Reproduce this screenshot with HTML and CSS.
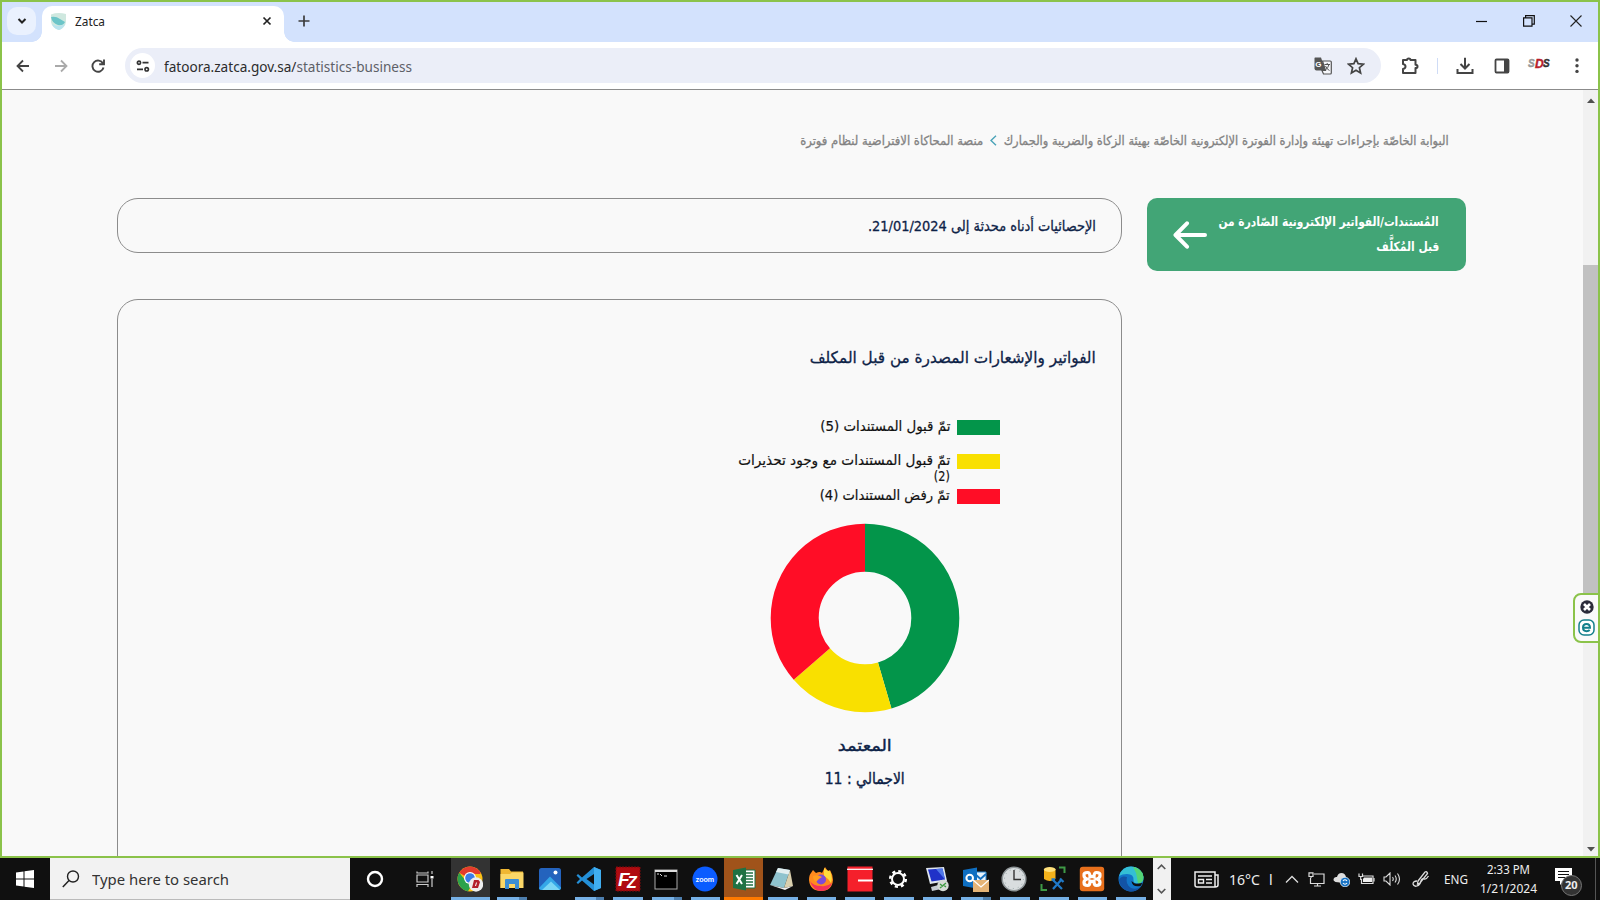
FILE: index.html
```html
<!DOCTYPE html>
<html lang="en">
<head>
<meta charset="utf-8">
<title>Zatca</title>
<link rel="stylesheet" href="styles.css">
</head>
<body>
<div class="desktop">
  <div class="window">
    <header class="tabstrip">
      <div class="tabsearch"><svg width="10" height="8" viewBox="0 0 10 8"><path d="M1.500 2 5 5.500 8.500 2" fill="none" stroke="#222" stroke-width="2"/></svg></div>
      <div class="tab">
        <svg class="favicon" width="17" height="17" viewBox="0 0 17 17"><path d="M1 1.500Q8-1 16 1V9Q15 15 9 17Q2 15 1 9Z" fill="#cfe8df"/><path d="M1 4Q6 3 10 6L15 9Q13 13 8 12Q2 10 1 4Z" fill="#6cc5c8"/><path d="M2 11Q8 15 15 11Q13 16 9 17Q4 16 2 11Z" fill="#b9e4ee"/></svg>
        <span class="fit tabtitle" data-w="30">Zatca</span>
        <svg class="tabclose" width="10" height="10" viewBox="0 0 10 10"><path d="M1.500 1.500 8.500 8.500M8.500 1.500 1.500 8.500" stroke="#222" stroke-width="1.700"/></svg>
      </div>
      <svg class="plus" width="12" height="12" viewBox="0 0 12 12"><path d="M6 .5V11.500M.5 6H11.500" stroke="#3c3c3c" stroke-width="1.700"/></svg>
      <div class="wincontrols">
        <svg width="12" height="12" viewBox="0 0 12 12"><path d="M0 6.500H11" stroke="#111" stroke-width="1.200"/></svg>
        <svg width="12" height="12" viewBox="0 0 12 12"><path d="M.6 2.800H9V11.200H.6ZM2.600 2.800V.7H11.300V9.200H9" fill="none" stroke="#111" stroke-width="1.200"/></svg>
        <svg width="12" height="12" viewBox="0 0 12 12"><path d="M.5.5 11.500 11.500M11.500.5.5 11.500" stroke="#222" stroke-width="1.100"/></svg>
      </div>
    </header>
    <div class="toolbar">
      <svg class="nav" width="14" height="14" viewBox="0 0 14 14"><path d="M13 7H2M7 1.500 1.500 7 7 12.500" fill="none" stroke="#444" stroke-width="1.800"/></svg>
      <svg class="nav" width="14" height="14" viewBox="0 0 14 14"><path d="M1 7H12M7 1.500 12.500 7 7 12.500" fill="none" stroke="#aaa" stroke-width="1.800"/></svg>
      <svg class="nav" width="14" height="14" viewBox="0 0 14 14"><path d="M12 4.500A5.600 5.600 0 1 0 12.500 8.500M13 .5V5.200H8.200" fill="none" stroke="#444" stroke-width="1.900"/></svg>
      <div class="omnibox">
        <div class="siteinfo"><svg width="14" height="12" viewBox="0 0 14 12"><g fill="none" stroke="#333" stroke-width="1.700"><circle cx="3" cy="2.700" r="1.600"/><path d="M6.500 2.700H12.500M1 9.300H7"/><circle cx="10.700" cy="9.300" r="1.700"/></g></svg></div>
        <span class="fit url" data-w="248">fatoora.zatca.gov.sa/<i>statistics-business</i></span>
        <svg class="translate" width="18" height="18" viewBox="0 0 18 18"><path d="M1 .5H7L11.500 13.500H2.500Q.5 13.500.5 11.500V1Z" fill="#555"/><path d="M8.500 4H16.300Q17.300 4 17.300 5V16Q17.300 17 16.300 17H9.500L8 13.500H11.500Z" fill="#f6f7fb" stroke="#555" stroke-width="1.200"/><path d="M10.500 7.500H16M13.200 6V7.500M15 7.500Q14 11 11.500 13M11.500 9Q13 12.500 15.500 13.500" fill="none" stroke="#555"/><text x="1.300" y="10.400" class="gletter">G</text></svg>
        <svg class="star" width="18" height="18" viewBox="0 0 18 18"><path d="M9 1.800 11.100 6.700 16.400 7.200 12.400 10.700 13.600 16 9 13.200 4.400 16 5.600 10.700 1.600 7.200 6.900 6.700Z" fill="none" stroke="#444" stroke-width="1.700"/></svg>
      </div>
      <svg class="puzzle" width="18" height="18" viewBox="0 0 18 18"><path d="M2 3H6Q6 1.500 7.800 1.500Q9.500 1.500 9.500 3H14.500V7.800Q16.500 7.800 16.500 9.400Q16.500 11 14.500 11V16H2V12Q4.500 11.500 4.500 9.500Q4.500 7.500 2 7Z" fill="none" stroke="#444" stroke-width="2" stroke-linejoin="round"/></svg>
      <span class="sep"></span>
      <svg class="download" width="18" height="18" viewBox="0 0 18 18"><path d="M9 .8V11M4.500 7 9 11.500 13.500 7M1.500 12V16H16.500V12" fill="none" stroke="#444" stroke-width="2"/></svg>
      <svg class="sidepanel" width="16" height="16" viewBox="0 0 16 16"><rect x="1.500" y="1.500" width="13" height="13" rx="1" fill="none" stroke="#444" stroke-width="1.800"/><path d="M10 1H15V15H10Z" fill="#444"/></svg>
      <div class="profile"><span>S</span><b>D</b><em>S</em></div>
      <svg class="dots" width="4" height="16" viewBox="0 0 4 16" fill="#444"><circle cx="2" cy="2" r="1.700"/><circle cx="2" cy="7.700" r="1.700"/><circle cx="2" cy="13.400" r="1.700"/></svg>
    </div>
    <div class="viewport">
      <main class="page" dir="rtl" lang="ar">
        <nav class="crumbs">
          <span class="fit" data-w="445">البوابة الخاصّة بإجراءات تهيئة وإدارة الفوترة الإلكترونية الخاصّة بهيئة الزكاة والضريبة والجمارك</span>
          <svg width="7" height="11" viewBox="0 0 7 11"><path d="M6 .8 1 5.500 6 10.200" fill="none" stroke="#4aa3b8" stroke-width="1.400"/></svg>
          <span class="fit" data-w="183">منصة المحاكاة الافتراضية لنظام فوترة</span>
        </nav>
        <div class="columns">
          <aside class="sidecard">
            <div class="sidetext">
              <span class="fit" data-w="220">المُستندات/الفواتير الإلكترونية الصّادرة من</span>
              <span class="fit" data-w="63">قبل المُكلَّف</span>
            </div>
            <svg width="34" height="28" viewBox="0 0 34 28"><path d="M32 14H3M14 2.300 2.500 14 14 25.700" fill="none" stroke="#fff" stroke-width="4" stroke-linecap="round" stroke-linejoin="round"/></svg>
          </aside>
          <section class="content">
            <div class="notice"><span class="fit" data-w="228">الإحصائيات أدناه محدثة إلى 21/01/2024.</span></div>
            <div class="panel">
              <h1 class="fit" data-w="286">الفواتير والإشعارات المصدرة من قبل المكلف</h1>
              <div class="chartcol">
                <ul class="legend">
                  <li><i class="sw green"></i><span class="fit" data-w="130">تمّ قبول المستندات (5)</span></li>
                  <li><i class="sw yellow"></i><div><span class="fit" data-w="212">تمّ قبول المستندات مع وجود تحذيرات</span><span class="fit" data-w="16">(2)</span></div></li>
                  <li><i class="sw red"></i><span class="fit" data-w="130">تمّ رفض المستندات (4)</span></li>
                </ul>
                <svg class="donut" width="190" height="190" viewBox="-95 -95 190 190">
                  <g fill="none" stroke-width="48" transform="rotate(-90)">
                    <circle r="70.300" pathLength="11" stroke="#03954a" stroke-dasharray="5 6"/>
                    <circle r="70.300" pathLength="11" stroke="#f9e000" stroke-dasharray="2 9" stroke-dashoffset="-5"/>
                    <circle r="70.300" pathLength="11" stroke="#ff0d26" stroke-dasharray="4 7" stroke-dashoffset="-7"/>
                  </g>
                </svg>
                <div class="caption"><span class="fit" data-w="54">المعتمد</span></div>
                <div class="caption"><span class="fit" data-w="80">الاجمالي : 11</span></div>
              </div>
            </div>
          </section>
        </div>
      </main>
      <div class="scrollbar">
        <svg width="8" height="5" viewBox="0 0 8 5"><path d="M0 5 4 .5 8 5Z" fill="#505050"/></svg>
        <div class="thumb"></div>
        <svg width="8" height="5" viewBox="0 0 8 5"><path d="M0 0 4 4.500 8 0Z" fill="#505050"/></svg>
      </div>
    </div>
    <div class="widget">
      <svg width="14" height="14" viewBox="0 0 14 14"><circle cx="7" cy="7" r="6.700" fill="#2b2b3a"/><path d="M4 4 10 10M10 4 4 10" stroke="#fff" stroke-width="2.600"/></svg>
      <svg width="17" height="17" viewBox="0 0 17 17"><rect x="1" y="1" width="15" height="15" rx="5" fill="#fff" stroke="#14808c" stroke-width="1.500"/><path d="M4.500 8.700H12Q12 5 8.500 5Q5 5 5 8.600Q5 12.200 8.600 12.200Q10.500 12.200 11.700 11" fill="none" stroke="#14808c" stroke-width="2"/></svg>
    </div>
  </div>
  <footer class="taskbar">
    <div class="start"><svg width="18" height="18" viewBox="0 0 18 18" fill="#fff"><path d="M0 2.500 7.500 1.400V8.500H0ZM8.500 1.200 18 0V8.500H8.500ZM0 9.500H7.500V16.600L0 15.500ZM8.500 9.500H18V18L8.500 16.800Z"/></svg></div>
    <div class="search"><svg width="18" height="18" viewBox="0 0 18 18"><circle cx="11" cy="6.500" r="5.500" fill="none" stroke="#222" stroke-width="1.400"/><path d="M7 10.500.8 17" stroke="#222" stroke-width="1.500"/></svg><span class="fit" data-w="137">Type here to search</span></div>
    <div class="cell cortana"><svg width="18" height="18" viewBox="0 0 18 18"><circle cx="9" cy="9" r="7" fill="none" stroke="#fff" stroke-width="2.400"/></svg></div>
    <div class="cell taskview"><svg width="18" height="17" viewBox="0 0 18 17"><path d="M1 4H12V11H1ZM1 .5V2H12V.5M1 16V13.500H12V16M16 0V3M16 8V16" fill="none" stroke="#ccc" stroke-width="1.200"/><path d="M14.500 5H17.500V7.500H14.500Z" fill="#fff"/></svg></div>
    <div class="apps">
      <div class="app on active"><svg viewBox="0 0 26 26"><circle cx="13" cy="13" r="12.500" fill="#fbc116"/><path d="M13 13 2.200 6.800A12.500 12.500 0 0 1 23.800 6.800L23 8H13Z" fill="#e33b2e"/><path d="M2.200 6.800A12.500 12.500 0 0 0 11 25.300L16 17 9 15Z" fill="#2ba24c"/><circle cx="13" cy="12" r="6" fill="#fff"/><circle cx="13" cy="12" r="4.800" fill="#3b7de8"/><circle cx="19" cy="18.500" r="7.200" fill="#eee"/><path d="M17 14H21.500L23 16 21 22H15Z" fill="#b3202c"/><path d="M19 16.500H20L19 20H18Z" fill="#fff"/></svg></div>
      <div class="app on stack"><svg viewBox="0 0 26 26"><path d="M1.500 3H10L12 5.500H24V22H1.500Z" fill="#f0b732"/><path d="M1.500 8H11L13 6.500H24.500V22H1.500Z" fill="#fbd767"/><path d="M6 23V14Q6 13 7 13H19Q20 13 20 14V23H16V18H10V23Z" fill="#3c8ed4"/></svg></div>
      <div class="app"><svg viewBox="0 0 26 26"><rect x="2" y="2" width="22" height="22" rx="2.500" fill="#2463bd"/><path d="M2 22 13 10.500 24 21.500Q24 24 21.500 24H4.500Q2 24 2 22Z" fill="#35a8e8"/><path d="M5 24 14 15.500 23 24Z" fill="#7bd7f5"/><circle cx="18.500" cy="6.500" r="2" fill="#fff"/></svg></div>
      <div class="app on stack"><svg viewBox="0 0 26 26"><path d="M18 1 25 4V22L18 25 6 14.500 2 18 .5 16.500 4 13 .5 9.500 2 8 6 11.500ZM18 8 10.500 13 18 18.500Z" fill="#2490d8" fill-rule="evenodd"/><path d="M18 1 25 4V22L18 25Z" fill="#40aef0"/></svg></div>
      <div class="app on"><svg viewBox="0 0 26 26"><rect x="1" y="1" width="24" height="24" fill="#b00b10" stroke="#7b0a0c" stroke-dasharray="2 1"/><text x="3" y="20" class="fz">F</text><text x="12" y="22" class="fz sm">Z</text></svg></div>
      <div class="app on stack"><svg viewBox="0 0 26 26"><rect x="2" y="4" width="22" height="19" fill="#000" stroke="#aaa"/><path d="M2 5H24" stroke="#ddd" stroke-width="2"/><path d="M4 8H6M7 8 9 10M11 10H14" stroke="#ddd"/></svg></div>
      <div class="app on"><svg viewBox="0 0 26 26"><circle cx="13" cy="13" r="12.500" fill="#0b5cff"/><text x="13" y="15.500" class="zm" text-anchor="middle">zoom</text></svg></div>
      <div class="app on excel"><svg viewBox="0 0 26 26"><path d="M13 4H24V22H13Z" fill="#fff" stroke="#1f7244"/><path d="M15 7H22M15 10H22M15 13H22M15 16H22M15 19H22" stroke="#1f7244" stroke-width="1.500"/><path d="M2 4 15 1.500V24.500L2 22Z" fill="#1f7244"/><path d="M5.500 9 11 18M11 9 5.500 18" stroke="#fff" stroke-width="2"/></svg></div>
      <div class="app on"><svg viewBox="0 0 26 26"><path d="M9 2 21 4 15 22 1 19Z" fill="#8fc3ce"/><path d="M21 4 24 20 15 22Z" fill="#d9cfae"/><path d="M9 2 21 4 19.500 8.500 7 6Z" fill="#e2eef0"/><path d="M1 19 15 22 24 20 16 24Z" fill="#eee"/></svg></div>
      <div class="app on"><svg viewBox="0 0 26 26"><path d="M3 7 5 4 8 7Q12 5 14 7L17 1Q19 4 20 5L22 4Q25 9 25 14Q24 25 13 25Q2 25 1 14Q1 9 3 7Z" fill="#ff8a1e"/><path d="M16 2Q21 6 22 5Q25 12 23 17Q20 12 16 10Z" fill="#ffdb3b"/><path d="M2 15Q5 25 14 25Q22 24 24 17Q19 21 13 20Q5 20 2 15Z" fill="#f5325a"/><circle cx="13" cy="13.500" r="5" fill="#7d4bd8"/><path d="M5 10Q10 8 14 11Q10 13 8 16Q5 14 5 10Z" fill="#ff9c20"/></svg></div>
      <div class="app on"><svg viewBox="0 0 26 26"><path d="M.5.5H25.500V25.500H.5Z" fill="#f5202b"/><path d="M0 3.300H26" stroke="#fff" stroke-width="1.200"/><path d="M11 14.500H26" stroke="#fff" stroke-width="2"/></svg></div>
      <div class="app on"><svg viewBox="0 0 26 26"><circle cx="13" cy="13" r="7.800" fill="none" stroke="#fff" stroke-width="2.500" stroke-dasharray="3.100 3.030"/><circle cx="13" cy="13" r="6" fill="none" stroke="#fff" stroke-width="2"/></svg></div>
      <div class="app on"><svg viewBox="0 0 26 26"><path d="M2 2 20 1 23 15 6 18Z" fill="#dfe6ee"/><path d="M4 3.500 18.500 2.500 21 13.500 7.500 15.500Z" fill="#2032c8"/><path d="M12 3 18.500 2.500 21 13.500Z" fill="#4f78ea"/><path d="M7 21 18 18 22 22 8 25Z" fill="#c6ccd2"/><circle cx="19" cy="19.500" r="5.700" fill="#d5dbd5"/><path d="M16 18 18.500 20 16 22M22 17 19.500 19 22 21" fill="none" stroke="#3b9a3e" stroke-width="1.300"/></svg></div>
      <div class="app on stack"><svg viewBox="0 0 26 26"><path d="M12 6H23V18H12Z" fill="#e8f2fb" stroke="#2a85cf"/><path d="M12 8 17.500 13 23 8" fill="none" stroke="#1671c0" stroke-width="2"/><path d="M0 4 14 1.500V22.500L0 20Z" fill="#0f6fc2"/><circle cx="6.700" cy="12" r="3.300" fill="none" stroke="#fff" stroke-width="2"/><path d="M10 14H26V26H10Z" fill="#e6b476"/><path d="M10 14 18 21 26 14" fill="none" stroke="#fff" stroke-width="1.300"/></svg></div>
      <div class="app on"><svg viewBox="0 0 26 26"><circle cx="13" cy="13" r="11.800" fill="#d9dddf" stroke="#8e9598" stroke-width="1.500"/><circle cx="13" cy="13" r="9.500" fill="none" stroke="#9aa" stroke-dasharray="1 4"/><path d="M13 4V13.500H20" fill="none" stroke="#333" stroke-width="1.400"/></svg></div>
      <div class="app on"><svg viewBox="0 0 26 26"><path d="M4 3V13Q10 17 15.500 13V3Z" fill="#f4b21b"/><ellipse cx="9.700" cy="3.500" rx="5.800" ry="2.500" fill="#ffe07a"/><path d="M19 1.500H24.500V7M1.500 18V24H7" fill="none" stroke="#3f9a46" stroke-width="2"/><path d="M13 14 22 23M22 13 13 23M11.500 13.500H15M20 12.500 23.500 16" stroke="#2079c7" stroke-width="2.300"/></svg></div>
      <div class="app on"><svg viewBox="0 0 26 26"><rect x=".8" y=".8" width="24.400" height="24.400" rx="3" fill="#e8701c"/><path d="M8.500 6.500Q4.500 6.500 5 9.500Q5 12 8 13Q5 14 5 16.500Q5 19.500 8.500 19.500Q11 19.500 11 15.500H15Q15 19.500 17.500 19.500Q21 19.500 21 16.500Q21 14 18 13Q21 12 21 9.500Q21.500 6.500 17.500 6.500Q15 6.500 15 10.500H11Q11 6.500 8.500 6.500Z" fill="none" stroke="#fff" stroke-width="3.200"/></svg></div>
      <div class="app on"><svg viewBox="0 0 26 26"><circle cx="13" cy="13" r="12.500" fill="#1276c9"/><path d="M1 10Q4 .5 13 .5Q24 1 25.500 11Q25.500 17 20 17.500Q15 17.500 15.500 14Q16 8 9 8Q4 8 1 10Z" fill="#34bfd5"/><path d="M15 .8Q25 3 25.500 11Q25.500 17 20 17.500Q19 11 18 7Z" fill="#54d576"/><path d="M9 11Q7 18 13 22Q18 24 23 20.500Q19 26 12 25.500Q2 24 1 14Q3 9 9 11Z" fill="#1353a5"/><path d="M16 17Q17 18.500 24.500 17L22.500 20Q14 21.500 13.500 15Z" fill="#101010"/></svg></div>
    </div>
    <div class="spin"><svg width="9" height="6" viewBox="0 0 9 6"><path d="M.7 5 4.500 1.200 8.300 5" fill="none" stroke="#555" stroke-width="1.600"/></svg><svg width="9" height="6" viewBox="0 0 9 6"><path d="M.7 1 4.500 4.800 8.300 1" fill="none" stroke="#555" stroke-width="1.600"/></svg></div>
    <div class="tray">
      <svg class="news" width="25" height="17" viewBox="0 0 25 17"><path d="M1 1H21V16H3Q1 16 1 14ZM21 4H24V14Q24 16 21 16" fill="none" stroke="#eee" stroke-width="1.500"/><path d="M4 5H18M12 8.500H18M12 12H18M4.500 8.500H9.500V12H4.500Z" fill="none" stroke="#eee" stroke-width="1.400"/></svg>
      <span class="fit temp" data-w="31">16°C</span><span class="ell">l</span>
      <svg class="chev" width="14" height="9" viewBox="0 0 14 9"><path d="M1 7.500 7 1.500 13 7.500" fill="none" stroke="#ddd" stroke-width="1.300"/></svg>
      <svg class="mon" width="17" height="15" viewBox="0 0 17 15"><path d="M6 2H16V11.500H2.500V6M6 14H13M9.500 11.500V14M1 .8H5V4.500H1ZM3 4.500V6" fill="none" stroke="#ddd" stroke-width="1.200"/></svg>
      <svg class="cloud" width="17" height="15" viewBox="0 0 17 15"><path d="M2.500 10Q0 9 .5 7Q1.500 4.500 4 5Q5 1 8.500 1Q12 1 13 5L11 11Z" fill="#ddd"/><circle cx="12" cy="10" r="4.800" fill="#1672c4" stroke="#fff" stroke-width=".7"/><path d="M10 9Q12 6.500 14 9M14 11Q12 13.500 10 11" fill="none" stroke="#fff" stroke-width="1.200"/></svg>
      <svg class="batt" width="17" height="12" viewBox="0 0 17 12"><path d="M5 3H15V10.500H3.500V6" fill="none" stroke="#ddd" stroke-width="1.200"/><path d="M6 4.500H14V9H5V6Z" fill="#eee"/><path d="M16 5V8.500M1 .5V3.500H4.500V.5M2.700 3.500V7" fill="none" stroke="#ddd" stroke-width="1.200"/></svg>
      <svg class="vol" width="18" height="14" viewBox="0 0 18 14"><path d="M1 5H3L7 1V13L3 9H1ZM9.500 5Q11 7 9.500 9M12 3.500Q14.500 7 12 10.500M14.500 1.500Q18.500 7 14.500 12.500" fill="none" stroke="#ddd" stroke-width="1.100"/></svg>
      <svg class="pen" width="18" height="17" viewBox="0 0 18 17"><path d="M6 10 13 1Q15 0 15.500 2.500L8 12 5.500 13ZM5 10Q1 10 1 13Q2 16 5 15Q8 14 9 10Q9.500 7 12 8Q14 9 16.500 5" fill="none" stroke="#ddd" stroke-width="1.300"/></svg>
      <span class="fit lang" data-w="24">ENG</span>
      <div class="clock"><span class="fit" data-w="43">2:33 PM</span><span class="fit" data-w="57">1/21/2024</span></div>
      <div class="notes"><svg width="17" height="17" viewBox="0 0 17 17"><path d="M0 0H17V13H9L5 17V13H0Z" fill="#fff"/><path d="M3 3.500H14M3 6.500H14M3 9.500H10" stroke="#111" stroke-width="1.200"/></svg><b>20</b></div>
    </div>
  </footer>
</div>
<script src="fit.js"></script>
</body>
</html>
```
FILE: styles.css
```css
* { box-sizing: border-box; }
body { margin: 0; background: #101010; font-family: "Noto Sans", "Open Sans", sans-serif; }
svg { display: block; flex: none; }
.desktop { width: 1600px; height: 900px; display: flex; flex-direction: column; overflow: hidden; }
.window { position: relative; height: 858px; flex: none; display: flex; flex-direction: column; border: 2px solid #8bc34a; background: #fff; }
.fit { display: block; flex: none; white-space: nowrap; }
.fit > span { display: inline-block; transform-origin: left center; }
[dir="rtl"] .fit > span { transform-origin: right center; }

.tabstrip { height: 40px; flex: none; display: flex; align-items: center; background: #d3e2fd; }
.tabsearch { width: 29px; height: 28px; margin: 0 0 2px 5px; border-radius: 10px; background: #eaf1fe; display: flex; align-items: center; justify-content: center; }
.tab { width: 242px; height: 36px; align-self: flex-end; margin-left: 6px; padding: 0 12px 6px 8px; border-radius: 10px 10px 0 0; background: #fff; display: flex; align-items: center; position: relative; }
.tab::before, .tab::after { content: ""; position: absolute; bottom: 0; width: 10px; height: 10px; }
.tab::before { left: -10px; background: radial-gradient(circle at 0 0, transparent 9.5px, #fff 10px); }
.tab::after { right: -10px; background: radial-gradient(circle at 100% 0, transparent 9.5px, #fff 10px); }
.tabtitle { margin-left: 8px; font-size: 12.5px; color: #222; }
.tabclose { margin-left: auto; }
.plus { margin: 0 0 2px 14px; }
.wincontrols { margin: 0 16px 2px auto; display: flex; gap: 35px; }

.toolbar { height: 48px; flex: none; display: flex; align-items: center; padding: 0 16px 0 14px; border-bottom: 1px solid #8b8b8b; background: #fff; }
.nav { margin-right: 24px; }
.nav:nth-child(3) { margin: 0 20px 0 -1px; }
.omnibox { width: 1256px; height: 35px; padding: 0 16px 0 5px; border-radius: 18px; background: #ebeef8; display: flex; align-items: center; }
.siteinfo { width: 25px; height: 25px; border-radius: 50%; background: #fff; display: flex; align-items: center; justify-content: center; }
.url { margin-left: 9px; font-size: 15px; color: #2c2c2c; }
.url i { font-style: normal; color: #5d6067; }
.translate { margin-left: auto; }
.gletter { font: bold 8px "Liberation Sans", sans-serif; fill: #fff; }
.star { margin-left: 15px; }
.puzzle { margin-left: 20px; }
.sep { width: 1px; height: 16px; margin: 0 18px 0 18px; background: #cfdcf6; }
.sidepanel { margin-left: 20px; }
.profile { margin: -4px 0 0 18px; width: 22px; display: flex; font: italic bold 12px/12px "Liberation Sans", sans-serif; align-items: center; -webkit-text-stroke: .4px; }
.profile span { color: #999; width: 7px; font-size: 10px; }
.profile b { color: #b8202c; width: 8px; }
.profile em { color: #333; font-size: 10px; }
.dots { margin-left: auto; margin-right: 3px; }

.viewport { flex: 1; min-height: 0; display: flex; background: #f9f9f9; overflow: hidden; }
.page { flex: 1; padding: 40px 117px 0 115px; font-family: "DejaVu Sans", sans-serif; color: #0d2247; overflow: hidden; }
.crumbs { height: 20px; padding-right: 17px; display: flex; align-items: center; gap: 7px; font-size: 12.500px; color: #828282; -webkit-text-stroke: .3px; }
.columns { margin-top: 48px; display: flex; justify-content: space-between; }
.sidecard { width: 319px; height: 73px; border-radius: 10px; background: #42a576; color: #fff; padding: 0 27px 0 26px; display: flex; justify-content: space-between; align-items: center; }
.sidetext { display: flex; flex-direction: column; font-size: 13px; font-weight: bold; line-height: 25px; margin-top: -1px; }
.content { width: 1005px; }
.notice { height: 55px; border: 1px solid #8c8c8c; border-radius: 21px; padding-right: 25px; display: flex; align-items: center; font-size: 14.500px; -webkit-text-stroke: .3px; }
.panel { margin-top: 46px; height: 640px; border: 1px solid #8c8c8c; border-radius: 21px; padding: 45px 25px 0 0; }
h1 { margin: 0; font-size: 16px; font-weight: normal; line-height: 26px; -webkit-text-stroke: .3px; }
.chartcol { width: 400px; margin-right: 31px; display: flex; flex-direction: column; align-items: center; }
.legend { list-style: none; margin: 46px 0 0; padding: 0 65px 0 0; align-self: stretch; color: #111; font-size: 14px; line-height: 16px; -webkit-text-stroke: .2px; }
.legend li { display: flex; align-items: flex-start; gap: 7px; height: 34.400px; }
.legend .fit { position: relative; top: 1px; }
.sw { width: 43px; height: 15px; flex: none; margin-top: 3px; }
.green { background: #03954a; } .yellow { background: #f9e000; } .red { background: #ff0d26; }
.donut { margin: 3px 0 16px; }
.caption { height: 33px; display: flex; align-items: center; font-size: 16px; -webkit-text-stroke: .4px; }

.scrollbar { width: 15px; background: #f1f1f1; display: flex; flex-direction: column; align-items: center; padding: 8px 0 4px; }
.thumb { width: 15px; height: 335px; margin: 162px 0 auto; background: #c1c1c1; }
.widget { position: absolute; right: -2px; top: 591px; width: 27px; height: 50px; border: 2px solid #8bc34a; border-radius: 8px 0 0 8px; background: #fafafa; display: flex; flex-direction: column; align-items: center; gap: 5px; padding-top: 5px; }

.taskbar { height: 42px; flex: none; display: flex; background: #101010; color: #eee; }
.start { width: 50px; display: flex; align-items: center; justify-content: center; }
.search { width: 300px; background: #f2f2f2; border-bottom: 1px solid #bbb; display: flex; align-items: center; padding-left: 12px; gap: 12px; color: #333; font-size: 15px; }
.cell { width: 50px; display: flex; align-items: center; justify-content: center; }
.apps { display: flex; margin-left: 1px; }
.app { width: 38.700px; height: 42px; display: flex; justify-content: center; align-items: center; position: relative; }
.app svg { width: 26px; height: 26px; }
.app.on::after { content: ""; position: absolute; left: 5px; right: 4px; bottom: 0; height: 3px; background: #76b0e5; }
.app.stack::after { background: linear-gradient(90deg, #76b0e5 72%, #4e7fae 72%); }
.app.active { background: #333; margin-right: 2.500px; } .app.active::after { left: 0; right: 0; }
.app.excel { background: #a0531a; } .app.excel::after { left: 0; right: 0; background: #ff7a00; }
.fz { font: italic bold 19px "Liberation Sans", sans-serif; fill: #fff; }
.fz.sm { font-size: 16px; }
.zm { font: bold 7.500px Lato, sans-serif; fill: #fff; }
.spin { width: 18px; margin-left: 3px; background: #f1f1f1; display: flex; flex-direction: column; justify-content: space-between; align-items: center; padding: 6px 0; }
.tray { flex: 1; display: flex; align-items: center; padding-left: 23px; border-right: 1px solid #555; margin-right: 4px; }
.temp { margin-left: 10px; font-size: 15px; }
.ell { margin-left: 9px; width: 4px; font-size: 14px; }
.chev { margin-left: 12px; }
.mon { margin-left: 9px; } .cloud { margin-left: 8px; } .batt { margin-left: 8px; } .vol { margin-left: 8px; } .pen { margin-left: 11px; }
.lang { margin-left: 14px; font-size: 12.500px; }
.clock { width: 60px; margin-left: 11px; display: flex; flex-direction: column; align-items: center; font-size: 12px; line-height: 19px; margin-top: -1px; }
.notes { position: relative; margin: -6px 0 0 16px; }
.notes b { position: absolute; left: 6px; top: 7px; width: 21px; height: 21px; border-radius: 50%; border: 1px solid #777; background: #333; font-size: 11px; line-height: 18px; text-align: center; }
```
FILE: fit.js
```js
// Sets each label to the width given in its data-w attribute.
document.querySelectorAll('.fit').forEach(function (el) {
  var inner = document.createElement('span');
  while (el.firstChild) inner.appendChild(el.firstChild);
  el.appendChild(inner);
  var width = parseFloat(el.dataset.w);
  var natural = inner.getBoundingClientRect().width;
  el.style.width = width + 'px';
  inner.style.transform = 'scaleX(' + width / natural + ')';
});
```
